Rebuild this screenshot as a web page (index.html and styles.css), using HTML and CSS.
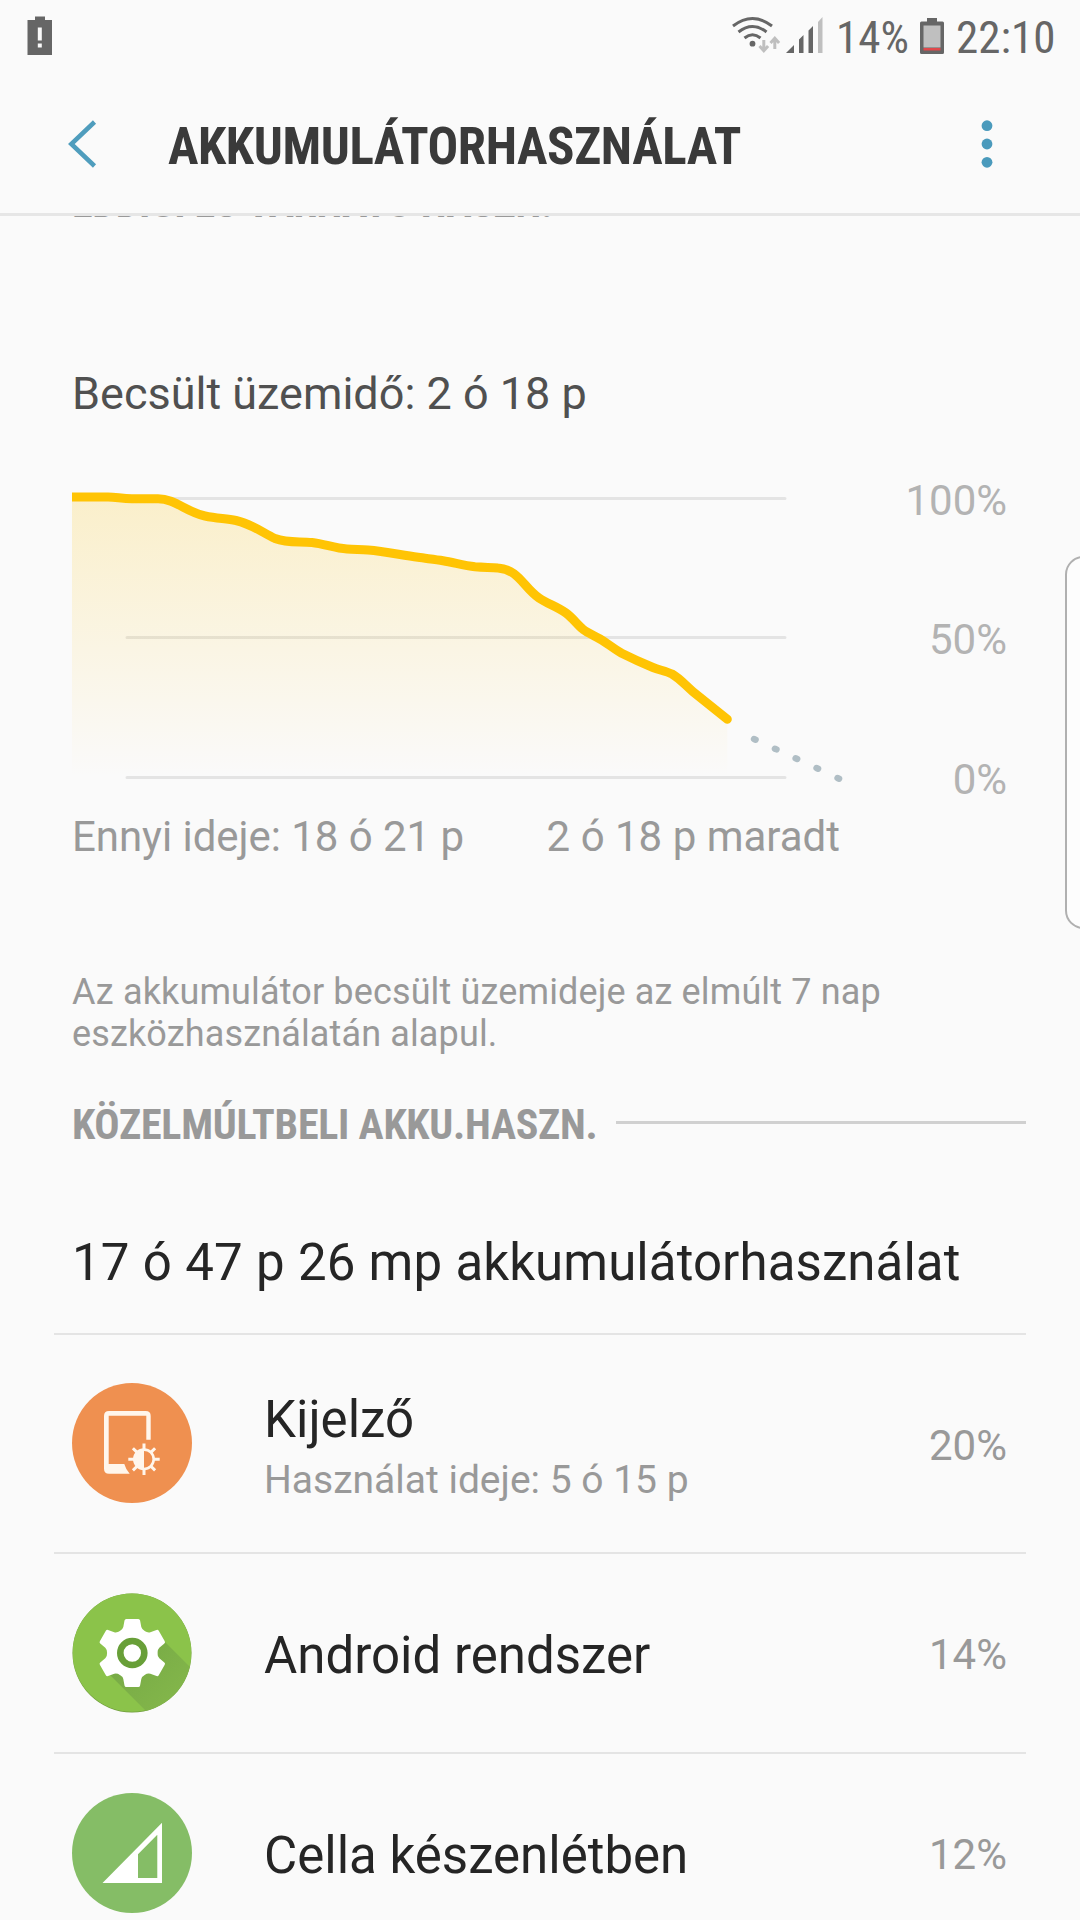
FILE: index.html
```html
<!DOCTYPE html>
<html lang="hu">
<head>
    <meta charset="UTF-8">
    <meta name="viewport" content="width=device-width, initial-scale=1.0">
    <title>Akkumulátorhasználat</title>
    <link rel="stylesheet" href="styles.css">
</head>
<body>

<div class="status-bar">
    <svg class="battery-warning" width="26" height="40" viewBox="0 0 26 40">
        <path fill="#666" fill-rule="evenodd" d="M8 0.500h10v3.500h7v35H0.500V4H8zM10.800 11.500v13h4v-13zM10.800 27.500v4h4v-4z"/>
    </svg>
    <div class="status-right">
        <svg class="signals" width="92" height="40" viewBox="732 16 92 40">
            <g fill="none" stroke="#666" stroke-width="3">
                <path d="M733 26q19.500-15 39 0"/>
                <path d="M738.500 32q14-11 28 0"/>
                <path d="M744.500 38q8-6.500 16 0"/>
            </g>
            <circle cx="752.500" cy="43.700" r="2.900" fill="#666"/>
            <g fill="none" stroke="#bfbfbf" stroke-width="3">
                <path d="M763.800 40v11M759.500 46l4.300 4.800 4.300-4.800M774.800 49V38.500M770.500 43l4.300-4.800 4.300 4.800"/>
            </g>
            <path fill="#666" d="M786 53h8v-8zM799 53h4.500V35l-4.500 4.500zM808.500 53h4.500V26l-4.500 4.500z"/>
            <path fill="#bfbfbf" d="M818 53h4.500V17l-4.500 5z"/>
        </svg>
        <span class="condensed level">14%</span>
        <svg class="battery" width="24" height="36" viewBox="0 0 24 36">
            <path fill="#666" d="M7 0h10v3.500h5.500q1.500 0 1.500 1.500v29.500q0 1.500-1.500 1.500h-21Q0 36 0 34.500V5q0-1.500 1.500-1.500H7z"/>
            <path fill="#bfbfbf" d="M3.500 7.500h17v22h-17z"/>
            <path fill="#e0484b" d="M3.500 30h17v2.500h-17z"/>
        </svg>
        <span class="condensed clock">22:10</span>
    </div>
</div>

<div class="header">
    <svg class="back" width="30" height="50" viewBox="0 0 30 50">
        <path fill="none" stroke="#4f9dbd" stroke-width="4.500" d="M26.500 3L3.300 25l23.200 22"/>
    </svg>
    <h1 class="condensed title">AKKUMULÁTORHASZNÁLAT</h1>
    <svg class="more" width="12" height="50" viewBox="0 0 12 50">
        <g fill="#4a9abc">
            <circle cx="6" cy="6.700" r="5.400"/>
            <circle cx="6" cy="25" r="5.400"/>
            <circle cx="6" cy="43.300" r="5.400"/>
        </g>
    </svg>
</div>

<div class="content">
    <h2 class="condensed section cut">EDDIGI ÉS VÁRHATÓ HASZN.</h2>

    <p class="estimate">Becsült üzemidő: 2 ó 18 p</p>

    <div class="chart">
        <svg class="graph" width="780" height="310" viewBox="72 480 780 310">
            <defs>
                <linearGradient id="fade" x1="0" y1="495" x2="0" y2="777" gradientUnits="userSpaceOnUse">
                    <stop offset="0" stop-color="#fcc30a" stop-opacity="0.200"/>
                    <stop offset="1" stop-color="#fcc30a" stop-opacity="0"/>
                </linearGradient>
            </defs>
            <g stroke="#e4e4e4" stroke-width="3" stroke-linecap="round">
                <path d="M127 498.500H785M127 637.500H785M127 777.500H785"/>
            </g>
            <path fill="url(#fade)" d="M72 497H108C116 497 122 498.700 132 498.700H158C175 498.700 186 512 205 516C217 518.500 226 518.500 236 520.500C253 524.500 263 533 275 538.500C288 543.500 300 541 312 542.500C325 544 335 548.500 347 549C355 549.500 361 549.500 368 550C385 551.500 401 555 418 557.300C426 558.500 435 559.300 443 560.700C454 562.500 464 565.500 475 566.700C485 567.500 491 567.300 498 568C519 569.500 523 587 539 598C548 604 557 606.500 566 613C573 618 577 624.500 583 629.300C588 633 594 635.500 600 639C607 643 614 649 621.700 653.300C632 658.500 642 663 653 667.500C659 670 666 671 672 674C680 678.500 686 686 693 691.700L727.300 719.300V777H72z"/>
            <path fill="none" stroke="#ffc404" stroke-width="9" stroke-linecap="round" d="M72 497H108C116 497 122 498.700 132 498.700H158C175 498.700 186 512 205 516C217 518.500 226 518.500 236 520.500C253 524.500 263 533 275 538.500C288 543.500 300 541 312 542.500C325 544 335 548.500 347 549C355 549.500 361 549.500 368 550C385 551.500 401 555 418 557.300C426 558.500 435 559.300 443 560.700C454 562.500 464 565.500 475 566.700C485 567.500 491 567.300 498 568C519 569.500 523 587 539 598C548 604 557 606.500 566 613C573 618 577 624.500 583 629.300C588 633 594 635.500 600 639C607 643 614 649 621.700 653.300C632 658.500 642 663 653 667.500C659 670 666 671 672 674C680 678.500 686 686 693 691.700L727.300 719.300"/>
            <path stroke="#b0bec5" stroke-width="6.400" stroke-linecap="round" d="M754 739l1.600.7M774.900 748.700l1.600.7M795.600 758.300l1.600.7M816.500 768l1.600.7M837.500 778l1.600.7"/>
        </svg>
        <div class="scale">
            <span>100%</span>
            <span class="half">50%</span>
            <span>0%</span>
        </div>
    </div>

    <div class="times">
        <span class="since">Ennyi ideje: 18 ó 21 p</span>
        <span>2 ó 18 p maradt</span>
    </div>

    <p class="note">Az akkumulátor becsült üzemideje az elmúlt 7 nap eszközhasználatán alapul.</p>

    <div class="section-row">
        <h2 class="condensed section">KÖZELMÚLTBELI AKKU.HASZN.</h2>
        <div class="rule"></div>
    </div>

    <p class="total">17 ó 47 p 26 mp akkumulátorhasználat</p>

    <div class="list">
        <div class="item item-tall">
            <svg class="icon" width="120" height="120" viewBox="0 0 120 120">
                <circle cx="60" cy="60" r="60" fill="#ef9050"/>
                <path fill="#fff6ec" d="M37 28h36.700q5 0 5 5v23.700h-4.400v-24H36.700V81h15.600q1.500 5.500 5.400 9.700H37q-5 0-5-5V33q0-5 5-5z"/>
                <circle cx="72" cy="76.300" r="9.700" fill="none" stroke="#fff6ec" stroke-width="2.600"/>
                <path fill="#fff6ec" d="M72 66v20.600a10.300 10.300 0 0 1 0-20.600z"/>
                <path stroke="#fff6ec" stroke-width="3" d="M72 60.500v6M72 86v6M56.300 76.300h6M81.700 76.300h6M60.900 65.200l4.200 4.200M78.900 83.200l4.200 4.200M60.900 87.400l4.200-4.200M78.900 69.400l4.200-4.200"/>
            </svg>
            <div class="text">
                <div class="name">Kijelző</div>
                <div class="sub">Használat ideje: 5 ó 15 p</div>
            </div>
            <div class="percent">20%</div>
        </div>
        <div class="item">
            <svg class="icon" width="120" height="120" viewBox="0 0 120 120">
                <defs>
                    <clipPath id="disc"><circle cx="60" cy="60" r="59.500"/></clipPath>
                    <linearGradient id="shadow" x1="60" y1="60" x2="102" y2="102" gradientUnits="userSpaceOnUse">
                        <stop offset="0" stop-color="#78ab46"/>
                        <stop offset="1" stop-color="#82b54a"/>
                    </linearGradient>
                </defs>
                <circle cx="60" cy="60" r="59.500" fill="#6f9c3c"/>
                <g clip-path="url(#disc)">
                    <circle cx="60" cy="59.300" r="59.500" fill="#8bc34a"/>
                    <path fill="url(#shadow)" d="M37 81l37 37h46V76L92 48z"/>
                </g>
                <g fill="#fff" transform="translate(60.300 60)">
                    <circle r="24.500"/>
                    <path id="tooth" d="M-6-34H6q1.500 0 1.800 1.500L9-26q.5 2.500 4 4.500L0-10-13-21.500q3.500-2 4-4.500l1.200-6.500Q-7.500-34-6-34z"/>
                    <use href="#tooth" transform="rotate(60)"/>
                    <use href="#tooth" transform="rotate(120)"/>
                    <use href="#tooth" transform="rotate(180)"/>
                    <use href="#tooth" transform="rotate(240)"/>
                    <use href="#tooth" transform="rotate(300)"/>
                    <circle r="12" fill="none" stroke="#689f38" stroke-width="6.600"/>
                </g>
            </svg>
            <div class="text">
                <div class="name">Android rendszer</div>
            </div>
            <div class="percent">14%</div>
        </div>
        <div class="item">
            <svg class="icon" width="120" height="120" viewBox="0 0 120 120">
                <circle cx="60" cy="60" r="60" fill="#85bd66"/>
                <path fill="#fff" fill-rule="evenodd" d="M30.500 90L90 29.700V90zM66 61.300V85h19.300V41.700z"/>
            </svg>
            <div class="text">
                <div class="name">Cella készenlétben</div>
            </div>
            <div class="percent">12%</div>
        </div>
    </div>
</div>

<div class="edge-handle"></div>

</body>
</html>
```
FILE: styles.css
```css
body {
    margin: 0;
    height: 1920px;
    position: relative;
    background-color: #fafafa;
    font-family: Roboto, sans-serif;
    overflow: hidden;
}
h1, h2, p {
    margin: 0;
}
svg {
    display: block;
    flex-shrink: 0;
}
.condensed {
    font-family: "Roboto Condensed", Roboto, sans-serif;
}
.status-bar {
    display: flex;
    justify-content: space-between;
    height: 75px;
    padding: 0 24px 0 27px;
    font-size: 45px;
    line-height: 75px;
    color: #666;
}
.status-right {
    display: flex;
}
.battery-warning, .signals {
    margin-top: 16px;
}
.signals {
    margin-right: 12px;
}
.level {
    width: 72px;
}
.battery {
    margin: 18px 12px 0 12px;
}
.clock {
    width: 100px;
}
.header {
    position: relative;
    z-index: 1;
    display: flex;
    align-items: center;
    height: 138px;
    padding: 0 87px 0 68px;
    border-bottom: 3px solid #e6e6e6;
}
/* hides the heading that is scrolled under the bar */
.status-bar, .header {
    background-color: #fafafa;
}
.title {
    flex: 1;
    margin-left: 70px;
    padding-top: 5px;
    font-size: 51px;
    line-height: 60px;
    letter-spacing: -0.4px;
    color: #3a3a3a;
}
.content {
    padding: 0 72px;
}
.section {
    font-size: 42px;
    line-height: 50px;
    letter-spacing: -0.26px;
    color: #999;
}
.cut {
    margin-top: -38px;
    letter-spacing: -0.35px;
}
.estimate {
    margin-top: 139px;
    font-size: 45px;
    line-height: 54px;
    color: #505050;
}
.chart {
    display: flex;
    justify-content: space-between;
    height: 310px;
    margin-top: 59px;
}
.scale {
    display: flex;
    flex-direction: column;
    justify-content: space-between;
    height: 329px;
    margin: -4px 1px 0 0;
    font-size: 42px;
    line-height: 50px;
    text-align: right;
    color: #b3b3b3;
}
.half {
    padding-bottom: 1px;
}
.times {
    display: flex;
    justify-content: space-between;
    width: 768px;
    margin-top: 22px;
    font-size: 42px;
    line-height: 50px;
    color: #999;
}
.since {
    letter-spacing: -0.05px;
}
.note {
    margin-top: 109px;
    font-size: 36px;
    line-height: 42px;
    letter-spacing: 0.14px;
    color: #999;
}
.section-row {
    display: flex;
    align-items: center;
    margin: 45px -18px 0 0;
}
.section-row .section {
    width: 526px;
    white-space: nowrap;
}
.rule {
    flex: 1;
    height: 3px;
    margin: 0 0 5px 18px;
    background-color: #d0d0d0;
}
.total {
    margin-top: 83px;
    font-size: 51px;
    line-height: 60px;
    letter-spacing: 0.09px;
    word-spacing: 0.5px;
    color: #252525;
}
.list {
    margin: 40px -18px 0;
}
.item {
    display: flex;
    align-items: center;
    height: 198px;
    padding: 0 18px;
    border-top: 2px solid #e4e4e4;
}
.item-tall {
    height: 217px;
}
.item-tall .icon {
    margin-bottom: 1px;
}
.text {
    flex: 1;
    margin-left: 72px;
    padding-top: 5px;
}
.name {
    font-size: 51px;
    line-height: 60px;
    color: #252525;
}
.sub {
    margin-top: 7px;
    font-size: 39px;
    line-height: 46px;
    color: #999;
}
.percent {
    padding: 4px 1px 0 0;
    font-size: 42px;
    line-height: 50px;
    color: #999;
}
/* edge panel handle, runs off the right side of the screen */
.edge-handle {
    position: absolute;
    top: 556px;
    right: -22px;
    width: 33px;
    height: 369px;
    border: 2px solid #b0b0b0;
    border-radius: 20px;
    background-color: #fdfdfd;
}
```
